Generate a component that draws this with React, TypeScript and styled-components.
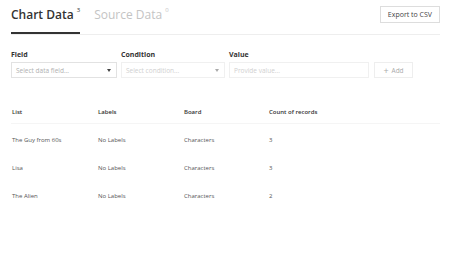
import styled, { createGlobalStyle } from "styled-components";

const GlobalStyle = createGlobalStyle`
  body {
    margin: 0;
    background: #fff;
    font-family: "Open Sans", "Noto Sans", sans-serif;
    color: #333;
  }
`;

const Page = styled.div`
  padding: 0 10px 0 11px;
  width: 450px;
  box-sizing: border-box;
`;

const TopBar = styled.div`
  display: flex;
  justify-content: space-between;
  align-items: flex-start;
  border-bottom: 1px solid #eee;
  height: 35px;
  box-sizing: border-box;
`;

const Tabs = styled.div`
  display: flex;
  gap: 14px;
  height: 100%;
`;

type ITab = { active?: boolean };
const Tab = styled.div<ITab>`
  font-size: 12px;
  font-weight: ${(p) => (p.active ? 600 : 400)};
  color: ${(p) => (p.active ? "#333" : "#c4c4c4")};
  padding-top: 6px;
  height: 100%;
  box-sizing: border-box;
  border-bottom: 2px solid ${(p) => (p.active ? "#333" : "transparent")};
  margin-bottom: -1px;
  white-space: nowrap;
  sup {
    font-size: 6px;
    font-weight: 400;
    margin-left: 3px;
    vertical-align: 7px;
  }
`;

const Button = styled.button`
  font-family: inherit;
  font-size: 7px;
  color: #444;
  background: #fff;
  border: 1px solid #ddd;
  height: 17px;
  padding: 0 7px;
  margin-top: 6px;
  cursor: pointer;
`;

const Filters = styled.div`
  display: flex;
  align-items: flex-end;
  gap: 4px;
  margin-top: 15px;
`;

const FilterGroup = styled.div<{ w: number }>`
  display: flex;
  flex-direction: column;
  gap: 2px;
  width: ${(p) => p.w}px;
`;

const Label = styled.div`
  font-size: 7px;
  font-weight: 700;
  color: #333;
  height: 10px;
  line-height: 10px;
`;

type IField = { faded?: boolean };
const Field = styled.div<IField>`
  height: 16px;
  border: 1px solid ${(p) => (p.faded ? "#f0f0f0" : "#e2e2e2")};
  box-sizing: border-box;
  display: flex;
  align-items: center;
  justify-content: space-between;
  padding: 0 5px 0 4px;
  font-size: 6.5px;
  color: ${(p) => (p.faded ? "#d0d0d0" : "#b0b0b0")};
`;

const Caret = styled.span<IField>`
  width: 0;
  height: 0;
  border-left: 2.5px solid transparent;
  border-right: 2.5px solid transparent;
  border-top: 3px solid ${(p) => (p.faded ? "#aaa" : "#444")};
`;

const AddButton = styled.div`
  height: 16px;
  width: 39px;
  margin-left: 1px;
  border: 1px solid #eee;
  box-sizing: border-box;
  font-size: 6.5px;
  color: #aaa;
  display: flex;
  align-items: center;
  justify-content: center;
  gap: 3px;
  span {
    font-size: 9px;
    line-height: 1;
  }
`;

const Table = styled.div`
  margin-top: 23px;
`;

const Row = styled.div<{ head?: boolean }>`
  display: grid;
  grid-template-columns: 86px 86px 85px 1fr;
  align-items: center;
  height: ${(p) => (p.head ? 22 : 28)}px;
  padding-left: 1px;
  font-size: 6px;
  font-weight: ${(p) => (p.head ? 600 : 400)};
  color: ${(p) => (p.head ? "#333" : "#555")};
  border-bottom: ${(p) => (p.head ? "1px solid #f5f5f5" : "none")};
  margin-bottom: ${(p) => (p.head ? 2 : 0)}px;
`;

const rows = [
  ["The Guy from 60s", "No Labels", "Characters", "3"],
  ["Lisa", "No Labels", "Characters", "3"],
  ["The Alien", "No Labels", "Characters", "2"],
];

const App = () => {
  return (
    <Page>
      <GlobalStyle />
      <TopBar>
        <Tabs>
          <Tab active>
            Chart Data<sup>3</sup>
          </Tab>
          <Tab>
            Source Data<sup>0</sup>
          </Tab>
        </Tabs>
        <Button>Export to CSV</Button>
      </TopBar>
      <Filters>
        <FilterGroup w={106}>
          <Label>Field</Label>
          <Field>
            Select data field... <Caret />
          </Field>
        </FilterGroup>
        <FilterGroup w={104}>
          <Label>Condition</Label>
          <Field faded>
            Select condition... <Caret faded />
          </Field>
        </FilterGroup>
        <FilterGroup w={140}>
          <Label>Value</Label>
          <Field faded>Provide value...</Field>
        </FilterGroup>
        <AddButton>
          <span>+</span> Add
        </AddButton>
      </Filters>
      <Table>
        <Row head>
          <div>List</div>
          <div>Labels</div>
          <div>Board</div>
          <div>Count of records</div>
        </Row>
        {rows.map((r) => (
          <Row key={r[0]}>
            {r.map((c, i) => (
              <div key={i}>{c}</div>
            ))}
          </Row>
        ))}
      </Table>
    </Page>
  );
};

export default App;
